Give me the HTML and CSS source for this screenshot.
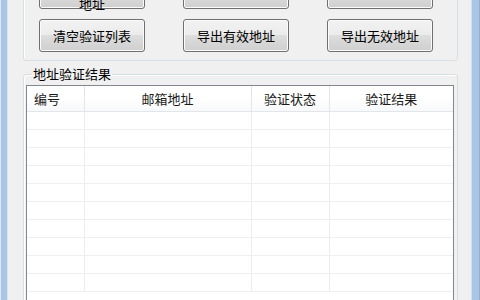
FILE: index.html
```html
<!DOCTYPE html>
<html lang="zh-CN">
<head>
<meta charset="utf-8">
<title>地址验证</title>
<link rel="stylesheet" href="styles.css">
</head>
<body>
<div class="window">
  <div class="frame frame-left"></div>
  <div class="client">
    <div class="group group-top">
      <div class="btn-grid">
        <button class="btn btn-two">导入邮箱<br>地址</button>
        <button class="btn">开始验证</button>
        <button class="btn">停止验证</button>
        <button class="btn">清空验证列表</button>
        <button class="btn">导出有效地址</button>
        <button class="btn">导出无效地址</button>
      </div>
    </div>
    <fieldset class="group group-result">
      <legend class="legend">地址验证结果</legend>
      <div class="list">
        <table class="grid">
          <colgroup>
            <col class="c1"><col class="c2"><col class="c3"><col class="c4">
          </colgroup>
          <thead>
            <tr><th class="left">编号</th><th>邮箱地址</th><th>验证状态</th><th>验证结果</th></tr>
          </thead>
          <tbody>
            <tr><td></td><td></td><td></td><td></td></tr>
            <tr><td></td><td></td><td></td><td></td></tr>
            <tr><td></td><td></td><td></td><td></td></tr>
            <tr><td></td><td></td><td></td><td></td></tr>
            <tr><td></td><td></td><td></td><td></td></tr>
            <tr><td></td><td></td><td></td><td></td></tr>
            <tr><td></td><td></td><td></td><td></td></tr>
            <tr><td></td><td></td><td></td><td></td></tr>
            <tr><td></td><td></td><td></td><td></td></tr>
            <tr><td></td><td></td><td></td><td></td></tr>
          </tbody>
        </table>
      </div>
    </fieldset>
  </div>
  <div class="frame frame-right"></div>
</div>
</body>
</html>
```

FILE: styles.css
```css
html, body {
  margin: 0;
  padding: 0;
  width: 480px;
  height: 300px;
  overflow: hidden;
  background: #f0f0f0;
  font-family: "Noto Sans CJK SC", "Noto Sans", sans-serif;
  font-size: 13px;
  color: #000;
}

.window {
  display: flex;
  width: 480px;
  height: 300px;
  overflow: hidden;
}

.frame-left {
  width: 8px;
  flex: none;
  background: linear-gradient(to right, #dbe7f4 0 1px, #aac6e4 1px 7px, #d6e4f2 7px 8px);
}

.frame-right {
  width: 10px;
  flex: none;
  background: linear-gradient(to right, #e6eef7 0 1px, #d2e2f2 1px 2px, #aac6e4 2px 9px, #8fb0d4 9px 10px);
}

.client {
  flex: 1;
  min-width: 0;
  padding: 0 12px 0 15px;
  background: #f0f0f0;
}

.group {
  border: 1px solid #d5dfe5;
  border-radius: 3px;
  box-shadow: inset 1px 1px 0 #fff;
}

.group-top {
  margin-top: -40px;
  padding: 15px 24px 8px 15px;
}

.btn-grid {
  display: grid;
  grid-template-columns: 106px 106px 106px;
  column-gap: 38px;
  row-gap: 10px;
}

.btn {
  height: 33px;
  padding: 0;
  margin: 0;
  border: 1px solid #707070;
  border-radius: 3px;
  background: linear-gradient(#f2f2f2 0%, #ebebeb 50%, #dddddd 50%, #cfcfcf 100%);
  box-shadow: inset 0 0 0 1px #fbfbfb;
  font-family: inherit;
  font-size: 13px;
  line-height: 16px;
  color: #000;
}

.btn-two {
  line-height: 18px;
}

.group-result {
  margin: 6px 0 0 0;
  padding: 0 3px 0 2px;
  min-width: 0;
  height: 260px;
}

.legend {
  margin-left: 6px;
  padding: 0 1px;
  font-size: 13px;
  line-height: 14px;
}

.list {
  margin-top: 4px;
  border: 1px solid #828790;
  background: #fff;
  height: 240px;
  overflow: hidden;
}

.grid {
  width: 100%;
  border-collapse: collapse;
  table-layout: fixed;
}

.c1 { width: 57px; }
.c2 { width: 167px; }
.c3 { width: 78px; }
.c4 { width: auto; }

.grid th {
  height: 25px;
  padding: 0;
  font-weight: normal;
  font-size: 13px;
  text-align: center;
  color: #1a1a1a;
  background: linear-gradient(#ffffff 0%, #ffffff 50%, #f7f8fa 100%);
  border-right: 1px solid #e5e5e5;
  border-bottom: 1px solid #e2e6ea;
}

.grid th:last-child {
  border-right: none;
}

.grid th.left {
  text-align: left;
  padding-left: 7px;
}

.grid td {
  height: 17px;
  padding: 0;
  border-right: 1px solid #ececec;
  border-bottom: 1px solid #efefef;
}

.grid td:last-child {
  border-right: none;
}
```
